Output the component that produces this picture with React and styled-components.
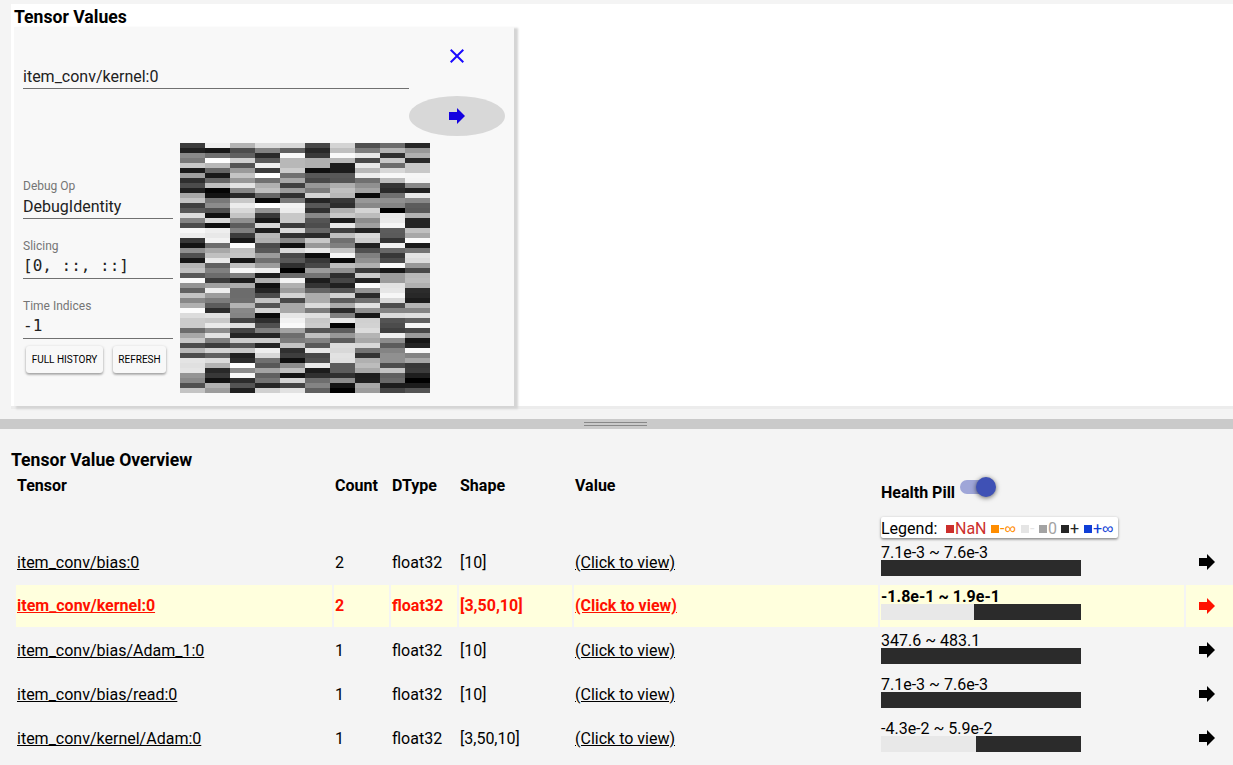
import React from "react";
import styled, { createGlobalStyle, css } from "styled-components";

const GlobalStyle = createGlobalStyle`
  * { box-sizing: border-box; }
  body {
    margin: 0;
    background: #f4f4f4;
    color: #000;
    font: 16px/20px Roboto, "Liberation Sans", sans-serif;
    overflow: hidden;
  }
`;

const Page = styled.div`
  display: flex;
  flex-direction: column;
  height: 765px;
  overflow: hidden;
`;

const ValuesSection = styled.section`
  margin: 4px 0 0 11px;
  height: 405px;
  padding-left: 3px;
  background: #fff;
  border-bottom: 3px solid #ececec;
  flex: none;
`;

const Heading = styled.h2`
  margin: 0;
  font-size: 17.6px;
  line-height: 25px;
  height: 23px;
  font-weight: 700;
  padding-top: ${(p) => p.$top || 0}px;
`;

const Card = styled.div`
  width: 500px;
  height: 379px;
  padding: 0 9px;
  background: #f8f8f8;
  box-shadow: 3px 2px 2px 1px #d5d5d5;
`;

const CardTop = styled.div`
  display: flex;
  height: 116px;
`;

const CardActions = styled.div`
  display: flex;
  flex-direction: column;
  gap: 20px;
  padding-top: 9px;
  width: 96px;
`;

const RoundButton = styled.button`
  display: flex;
  align-items: center;
  justify-content: center;
  width: 96px;
  height: 40px;
  padding: 0;
  border: 0;
  border-radius: 50%;
  color: ${(p) => (p.$active ? "#1400e0" : "#1a0aff")};
  background: ${(p) => (p.$active ? "#d8d8d8" : "transparent")};
`;

const Glyph = styled.svg`
  display: block;
  width: 24px;
  height: 24px;
  fill: currentColor;
`;

const Field = styled.div`
  display: flex;
  flex-direction: column;
  justify-content: flex-end;
  width: ${(p) => p.$width}px;
  height: ${(p) => p.$height}px;
  border-bottom: 1px solid #707070;
`;

const FieldLabel = styled.span`
  font-size: 12px;
  line-height: 16px;
  color: #757575;
`;

const FieldValue = styled.span`
  height: 24px;
  line-height: 26px;
  color: #212121;
  white-space: pre;
  ${(p) =>
    p.$mono &&
    css`
      line-height: 24px;
      font-family: "DejaVu Sans Mono", monospace;
    `}
`;

const CardBody = styled.div`
  display: flex;
  gap: 7px;
`;

const Controls = styled.div`
  width: 150px;
  padding-top: 16px;
`;

const ButtonRow = styled.div`
  display: flex;
  gap: 10px;
  margin: 7px 0 0 3px;
`;

const RaisedButton = styled.button`
  width: ${(p) => p.$width}px;
  height: 27px;
  padding: 0;
  border: 0;
  border-radius: 3px;
  background: #f8f8f8;
  color: #000;
  font: 10px/27px Roboto, sans-serif;
  text-transform: uppercase;
  white-space: nowrap;
  box-shadow: 0 1px 3px rgba(0, 0, 0, 0.3), 0 2px 2px rgba(0, 0, 0, 0.14);
`;

const HeatmapSvg = styled.svg`
  display: block;
  width: 250px;
  height: 250px;
`;

const Splitter = styled.div`
  display: flex;
  flex: none;
  justify-content: center;
  align-items: center;
  height: 10px;
  margin-top: 10px;
  padding-right: 2px;
  background: #cacaca;
`;

const Grip = styled.div`
  width: 63px;
  height: 4px;
  border: solid #888;
  border-width: 1px 0;
`;

const OverviewSection = styled.section`
  padding: 19px 0 0 11px;
`;

const Table = styled.table`
  margin: 2px 0 0 3px;
  width: 1236px;
  table-layout: fixed;
  border-collapse: separate;
  border-spacing: 2px;
`;

const HeadCell = styled.th`
  height: 64px;
  padding: 1px;
  text-align: left;
  vertical-align: top;
  font-weight: 700;
  line-height: 20px;
`;

const HeadPill = styled.div`
  display: flex;
  gap: 5px;
  height: 41px;
  padding-top: 2px;
`;

const HeadPillLabel = styled.span`
  padding-top: 5px;
`;

const Toggle = styled.div`
  display: flex;
  justify-content: flex-end;
  align-items: center;
  width: 34px;
  height: 14px;
  margin-top: 2px;
  border-radius: 7px;
  background: #9fa6d8;
`;

const Knob = styled.div`
  flex: none;
  width: 20px;
  height: 20px;
  margin-right: -2px;
  border-radius: 50%;
  background: #3f51b5;
  box-shadow: 0 1px 5px rgba(0, 0, 0, 0.6);
`;

const Legend = styled.div`
  display: flex;
  align-items: center;
  width: 237px;
  height: 21px;
  background: #fff;
  border-radius: 2px;
  font-weight: 400;
  box-shadow: 0 1px 3px rgba(0, 0, 0, 0.4), 0 2px 2px rgba(0, 0, 0, 0.12);
`;

const LegendTitle = styled.span`
  flex: none;
  width: 65px;
  padding-top: 2px;
`;

const LegendItem = styled.span`
  display: flex;
  flex: none;
  align-items: center;
  width: ${(p) => p.$width}px;
  padding-top: 2px;
  color: ${(p) => p.$color};

  &::before {
    content: "";
    flex: none;
    width: 8px;
    height: 8px;
    margin-right: 1px;
    background: ${(p) => p.$color};
  }
`;

const Infinity = styled.span`
  font-family: "Liberation Sans", sans-serif;
`;

const Row = styled.tr`
  font-weight: ${(p) => (p.$selected ? 700 : 400)};
  color: ${(p) => (p.$selected ? "#ff1100" : "#000")};
  background: ${(p) => (p.$selected ? "#ffffdd" : "transparent")};
`;

const Cell = styled.td`
  height: 42px;
  padding: ${(p) => (p.$low ? "3px 1px 1px" : "1px")};
  vertical-align: middle;
  white-space: nowrap;
  line-height: 20px;
`;

const Link = styled.span`
  text-decoration: underline;
`;

const Pill = styled.div`
  display: flex;
  flex-direction: column;
  height: 40px;
  padding-top: 3px;
  color: #000;
  line-height: 15px;
`;

const PillBar = styled.div`
  display: flex;
  width: 200px;
  height: 16px;
  background: #2b2b2b;
`;

const NegativePart = styled.div`
  background: #e8e8e8;
`;

const ArrowBox = styled.div`
  display: flex;
  padding-left: 8px;
`;

// One line per heatmap row, two hex digits of grey level per cell.
const HEATMAP = `
3cf0b4ddd848d4506c28
20184c826028c07cb498
8870602afa3afae830b0
78ffd05ab8b0b848c828
c8b854f0b8b01ce86cc8
1a669a3ccc101cb8d8c8
a01ac4ff705858eef8f6
2e669870a8485470bcf4
4cc0e4b04098ae903488
200588c09c7cc0a42a20
a8142a6630d4b80a70e8
c478c80a782438989088
408cecfff2582e88845c
5850d894ec30b0d40058
dd10c438c888c8bce8b4
84d89018c8541c8cea24
4c105cd83a4ce8a0f624
f8ee801ed86840225cc0
eee83cb8302ac0d85aa8
38f218b088c870cc34fa
146cfc4c10988020f21a
90a8c058d8e8c4506874
50c0c49c480cf48038e4
16e81670583808904cdc
b460c09c3048bcb0fa98
c080f8ee009c903a1848
586c801c6a742ecc9cb8
fa3c1cb0f41c46229cbc
94a0ac12b03420fce2b0
62ee6c249c645494e62c
c49c6c4cd4acd42af628
887c6ec448ac5c70d81c
b05cb454a8dcace24cb4
fc2c88d4a87c2a908484
dce0840ae6e08018dce0
ccc8442ef2c8e8d05460
cceae050facc02d24cf6
6c8c4480a4545cdc4048
a8e224246ec098b4f09c
c880cccc7c845ca88c16
4c3c5424c45adcd85c24
b8d4c8ee30e8d87484fa
4c6020d83e48e2349084
e4dc2c701050e0b090a8
e0b4ff588cea5cbc4c38
e4288ca4c01c5ca8c43c
9438f8601430301e601e
88122c74d46e8c206800
50b05426448414a81c1c
c49c20d0e260009c4454
`
  .trim()
  .split("\n")
  .map((line) => line.match(/../g));

function Heatmap() {
  return (
    <HeatmapSvg viewBox="0 0 250 250" shapeRendering="crispEdges">
      {HEATMAP.map((row, y) =>
        row.map((g, x) => (
          <rect key={`${x}-${y}`} x={x * 25} y={y * 5} width="25" height="5" fill={`#${g}${g}${g}`} />
        ))
      )}
    </HeatmapSvg>
  );
}

const ForwardIcon = () => (
  <Glyph viewBox="0 0 24 24">
    <path d="M12 8V4l8 8-8 8v-4H4V8z" />
  </Glyph>
);

const CloseIcon = () => (
  <Glyph viewBox="0 0 24 24">
    <path d="M19 6.41L17.59 5 12 10.59 6.41 5 5 6.41 10.59 12 5 17.59 6.41 19 12 13.41 17.59 19 19 17.59 13.41 12z" />
  </Glyph>
);

const COLUMNS = [316, 55, 66, 113, 304, 304, 62];

const LEGEND = [
  { text: "NaN", color: "#cc2f2c", width: 45 },
  { text: "-", infinite: true, color: "#ff8d00", width: 30 },
  { text: "-", color: "#e5e5e5", width: 18 },
  { text: "0", color: "#a3a3a3", width: 22 },
  { text: "+", color: "#252525", width: 23 },
  { text: "+", infinite: true, color: "#0f3ed6", width: 30 },
];

const TENSORS = [
  { name: "item_conv/bias:0", count: 2, shape: "[10]", range: "7.1e-3 ~ 7.6e-3", negative: 0 },
  { name: "item_conv/kernel:0", count: 2, shape: "[3,50,10]", range: "-1.8e-1 ~ 1.9e-1", negative: 93, selected: true },
  { name: "item_conv/bias/Adam_1:0", count: 1, shape: "[10]", range: "347.6 ~ 483.1", negative: 0 },
  { name: "item_conv/bias/read:0", count: 1, shape: "[10]", range: "7.1e-3 ~ 7.6e-3", negative: 0 },
  { name: "item_conv/kernel/Adam:0", count: 1, shape: "[3,50,10]", range: "-4.3e-2 ~ 5.9e-2", negative: 95 },
];

export default function App() {
  return (
    <Page>
      <GlobalStyle />
      <ValuesSection>
        <Heading $top={1}>Tensor Values</Heading>
        <Card>
          <CardTop>
            <Field $width={386} $height={62}>
              <FieldValue>item_conv/kernel:0</FieldValue>
            </Field>
            <CardActions>
              <RoundButton aria-label="Close">
                <CloseIcon />
              </RoundButton>
              <RoundButton $active aria-label="Go to">
                <ForwardIcon />
              </RoundButton>
            </CardActions>
          </CardTop>
          <CardBody>
            <Controls>
              <Field $width={150} $height={60}>
                <FieldLabel>Debug Op</FieldLabel>
                <FieldValue>DebugIdentity</FieldValue>
              </Field>
              <Field $width={150} $height={60}>
                <FieldLabel>Slicing</FieldLabel>
                <FieldValue $mono>[0, ::, ::]</FieldValue>
              </Field>
              <Field $width={150} $height={60}>
                <FieldLabel>Time Indices</FieldLabel>
                <FieldValue $mono>-1</FieldValue>
              </Field>
              <ButtonRow>
                <RaisedButton $width={77}>Full History</RaisedButton>
                <RaisedButton $width={53}>Refresh</RaisedButton>
              </ButtonRow>
            </Controls>
            <Heatmap />
          </CardBody>
        </Card>
      </ValuesSection>
      <Splitter>
        <Grip />
      </Splitter>
      <OverviewSection>
        <Heading>Tensor Value Overview</Heading>
        <Table>
          <colgroup>
            {COLUMNS.map((w, i) => (
              <col key={i} width={w} />
            ))}
          </colgroup>
          <thead>
            <tr>
              <HeadCell>Tensor</HeadCell>
              <HeadCell>Count</HeadCell>
              <HeadCell>DType</HeadCell>
              <HeadCell>Shape</HeadCell>
              <HeadCell>Value</HeadCell>
              <HeadCell>
                <HeadPill>
                  <HeadPillLabel>Health Pill</HeadPillLabel>
                  <Toggle>
                    <Knob />
                  </Toggle>
                </HeadPill>
                <Legend>
                  <LegendTitle>Legend:</LegendTitle>
                  {LEGEND.map((item, i) => (
                    <LegendItem key={i} $color={item.color} $width={item.width}>
                      {item.text}
                      {item.infinite && <Infinity>∞</Infinity>}
                    </LegendItem>
                  ))}
                </Legend>
              </HeadCell>
              <HeadCell />
            </tr>
          </thead>
          <tbody>
            {TENSORS.map((t) => (
              <Row key={t.name} $selected={t.selected}>
                <Cell $low={!t.selected}>
                  <Link>{t.name}</Link>
                </Cell>
                <Cell $low={!t.selected}>{t.count}</Cell>
                <Cell $low={!t.selected}>float32</Cell>
                <Cell $low={!t.selected}>{t.shape}</Cell>
                <Cell $low={!t.selected}>
                  <Link>(Click to view)</Link>
                </Cell>
                <Cell>
                  <Pill>
                    {t.range}
                    <PillBar>
                      <NegativePart style={{ width: t.negative }} />
                    </PillBar>
                  </Pill>
                </Cell>
                <Cell>
                  <ArrowBox>
                    <ForwardIcon />
                  </ArrowBox>
                </Cell>
              </Row>
            ))}
          </tbody>
        </Table>
      </OverviewSection>
    </Page>
  );
}
